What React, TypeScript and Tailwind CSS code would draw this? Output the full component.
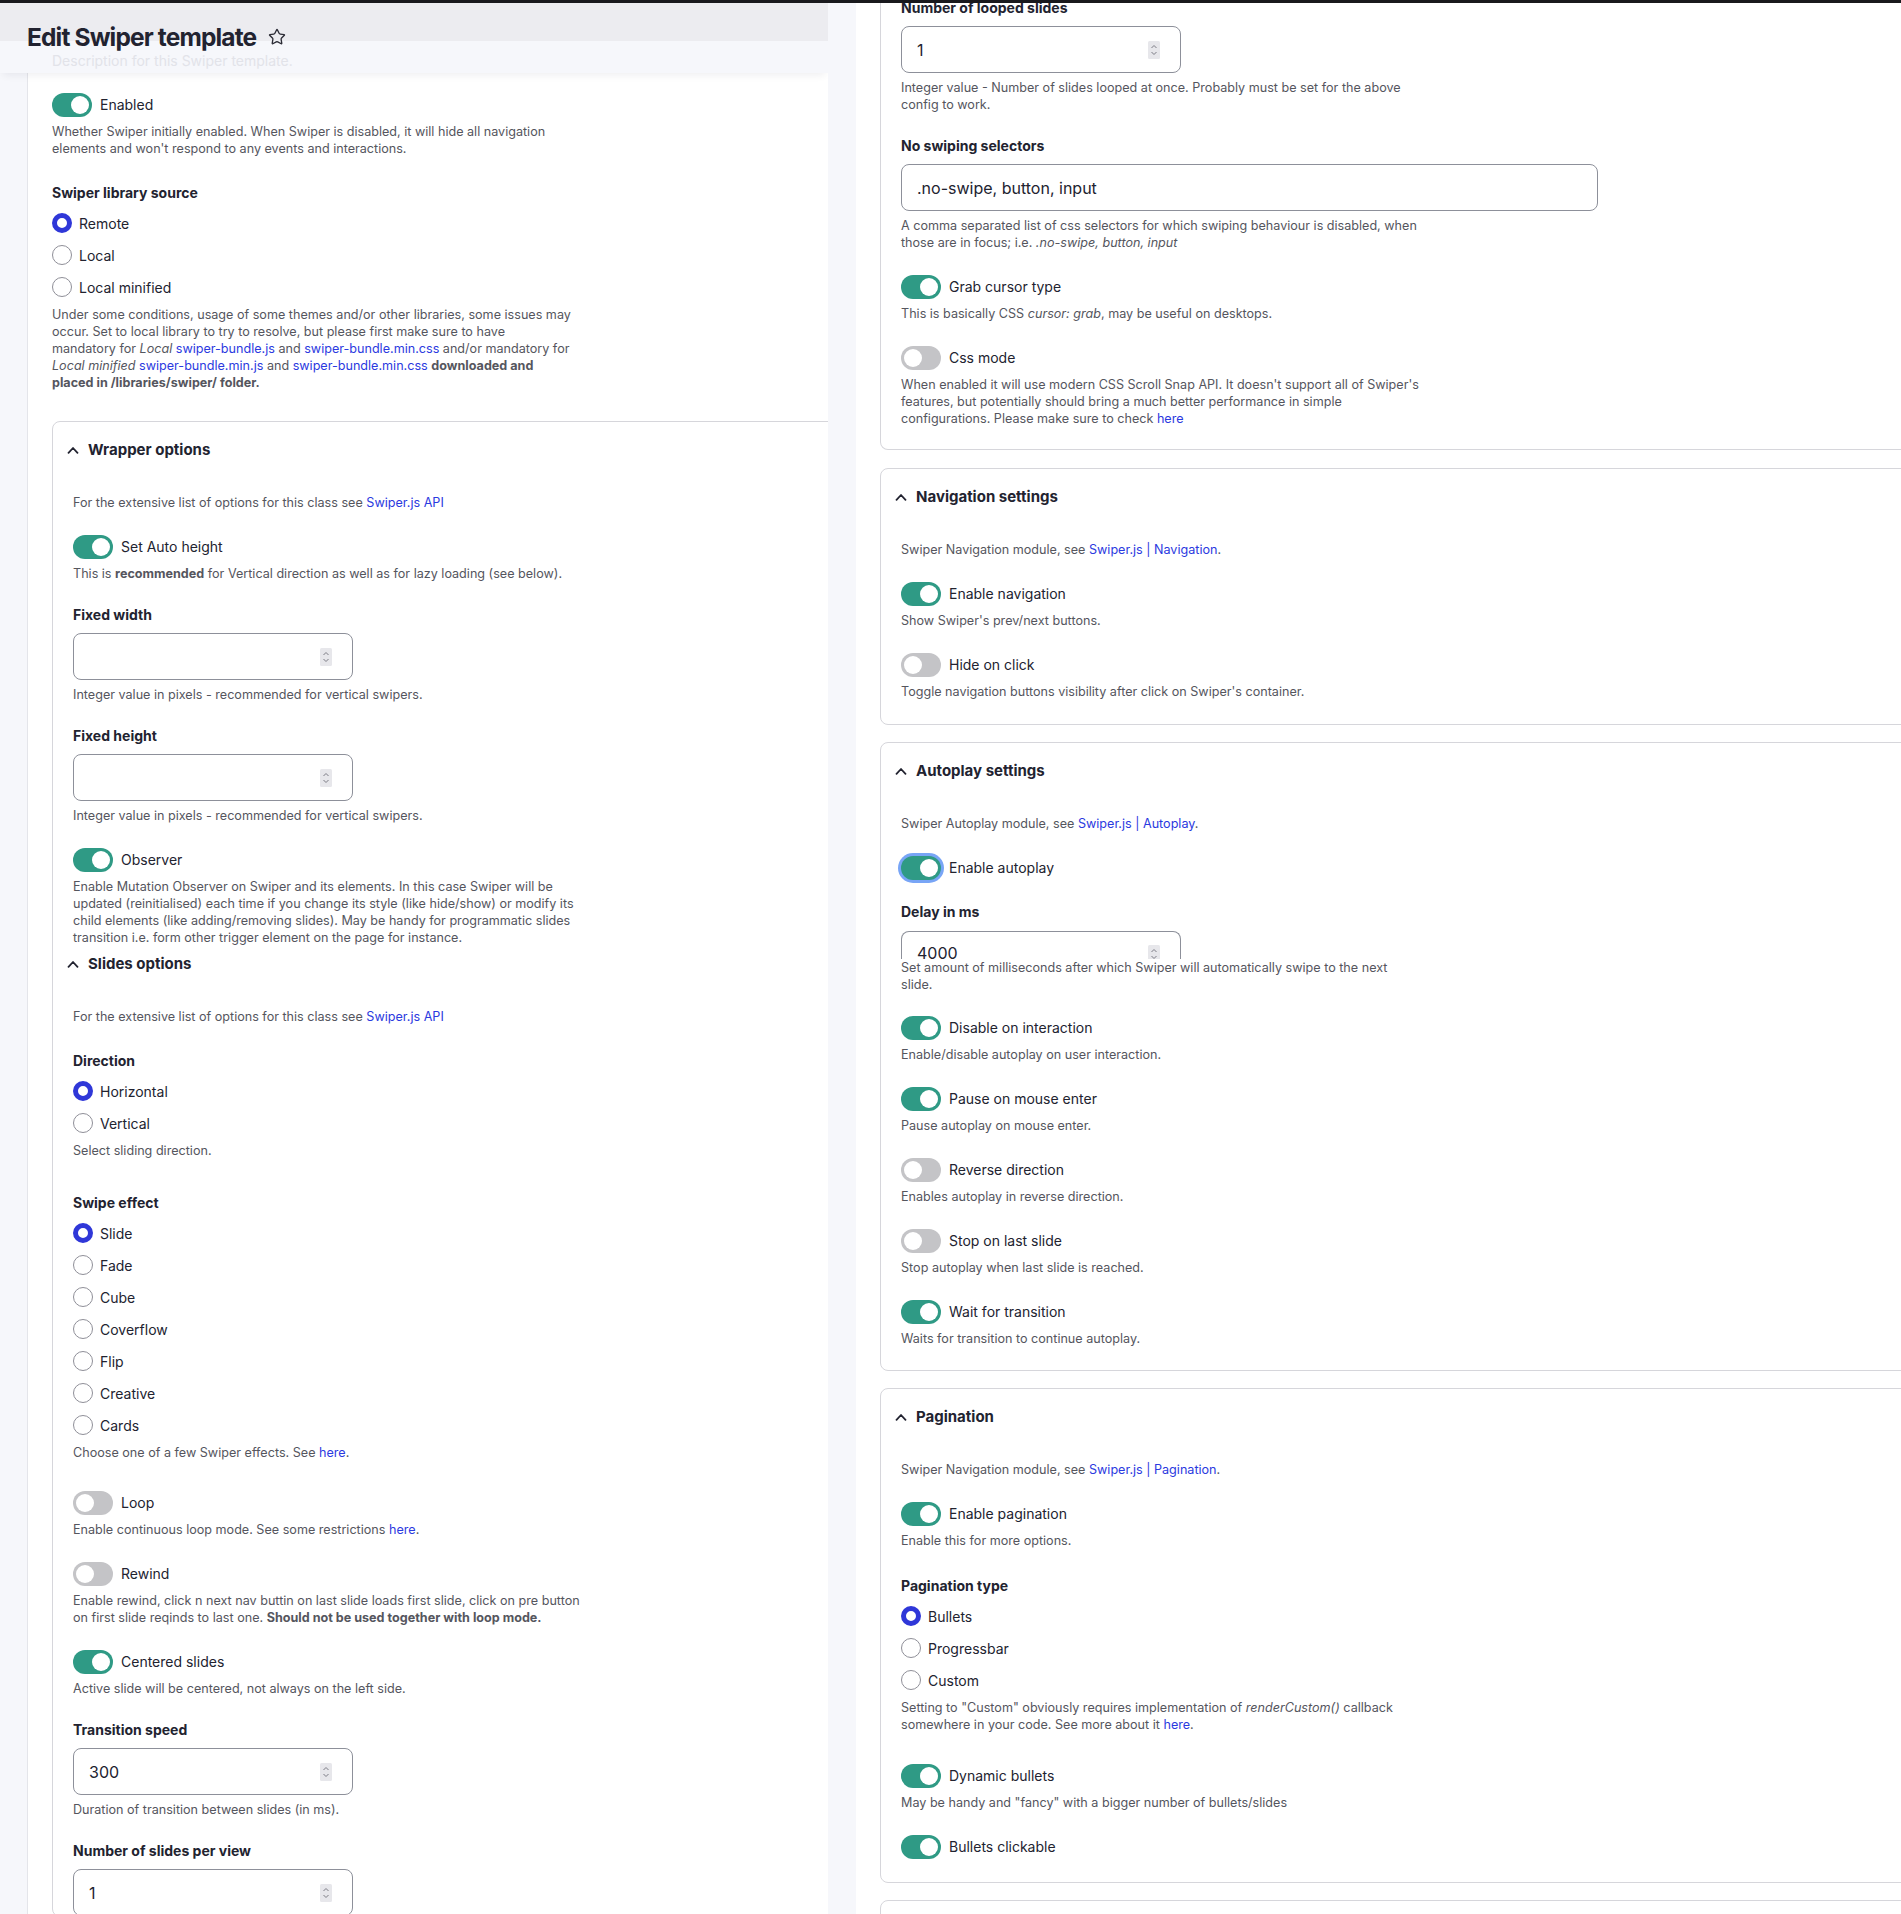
import { Star } from "lucide-react";
import type { ReactNode } from "react";

function A({ children }: { children: ReactNode }) {
  return <span className="text-[#2b3ae0]">{children}</span>;
}

function Desc({ children, className = "" }: { children: ReactNode; className?: string }) {
  return <div className={`max-w-[520px] text-[12.6px] leading-[17px] text-[#55565e] ${className}`}>{children}</div>;
}

function Label({ children, className = "" }: { children: ReactNode; className?: string }) {
  return <div className={`text-[14px] font-bold leading-[18px] ${className}`}>{children}</div>;
}

function Switch({ on, focus = false }: { on: boolean; focus?: boolean }) {
  return (
    <span
      className={`flex h-[24px] w-[40px] shrink-0 items-center rounded-full px-[3px] ${
        on ? "justify-end bg-[#2f9a85]" : "justify-start bg-[#c4c4c7]"
      } ${focus ? "ring-[3px] ring-[#78a5f6]" : ""}`}
    >
      <span className="h-[18px] w-[18px] rounded-full bg-white" />
    </span>
  );
}

function ToggleField({
  on = false,
  focus = false,
  label,
  desc,
  className = "",
}: {
  on?: boolean;
  focus?: boolean;
  label: string;
  desc?: ReactNode;
  className?: string;
}) {
  return (
    <div className={className}>
      <div className="flex h-[24px] items-center gap-[8px]">
        <Switch on={on} focus={focus} />
        <span className="text-[14px] leading-[18px]">{label}</span>
      </div>
      {desc && <Desc className="mt-[6px]">{desc}</Desc>}
    </div>
  );
}

function Radio({ checked = false, label }: { checked?: boolean; label: string }) {
  return (
    <div className="flex h-[32px] items-center gap-[7px]">
      <span
        className={`h-[20px] w-[20px] shrink-0 rounded-full bg-white ${
          checked ? "border-[5px] border-[#2f37d8]" : "border border-[#8f8f98]"
        }`}
      />
      <span className="text-[14px]">{label}</span>
    </div>
  );
}

function RadioGroup({
  label,
  options,
  desc,
  className = "",
}: {
  label: string;
  options: string[];
  desc: ReactNode;
  className?: string;
}) {
  return (
    <div className={className}>
      <Label>{label}</Label>
      <div className="mt-[5px]">
        {options.map((o, i) => (
          <Radio key={o} label={o} checked={i === 0} />
        ))}
      </div>
      <Desc className="mt-[3px]">{desc}</Desc>
    </div>
  );
}

function Spinner() {
  return (
    <svg width="12" height="18" viewBox="0 0 12 18" className="shrink-0">
      <rect width="12" height="18" rx="1.5" fill="#e7e7eb" />
      <path d="M3.5 7 L6 4.5 L8.5 7" fill="none" stroke="#7c7c85" strokeWidth="1" />
      <path d="M3.5 11 L6 13.5 L8.5 11" fill="none" stroke="#7c7c85" strokeWidth="1" />
    </svg>
  );
}

function NumberField({
  label,
  value = "",
  desc,
  className = "",
}: {
  label: string;
  value?: string;
  desc?: ReactNode;
  className?: string;
}) {
  return (
    <div className={className}>
      <Label>{label}</Label>
      <div className="mt-[9px] flex h-[47px] w-[280px] items-center justify-between rounded-[8px] border border-[#8d909a] pl-[15px] pr-[20px]">
        <span className="text-[16px]">{value}</span>
        <Spinner />
      </div>
      {desc && <Desc className="mt-[6px]">{desc}</Desc>}
    </div>
  );
}

function SectionHeader({ title, className = "" }: { title: string; className?: string }) {
  return (
    <div className={`-ml-[6px] flex h-[20px] items-center gap-[9px] ${className}`}>
      <svg width="12" height="8" viewBox="0 0 12 8" className="shrink-0">
        <path
          d="M1.5 6.8 L6 2 L10.5 6.8"
          fill="none"
          stroke="#222330"
          strokeWidth="1.8"
          strokeLinecap="round"
          strokeLinejoin="round"
        />
      </svg>
      <span className="text-[15px] font-bold">{title}</span>
    </div>
  );
}

function Fieldset({ children, className = "" }: { children: ReactNode; className?: string }) {
  return (
    <div className={`-mr-[40px] rounded-[8px] border border-[#d6d6db] pl-[20px] ${className}`}>{children}</div>
  );
}

function LeftColumn() {
  return (
    <div className="w-[828px] shrink-0 overflow-hidden bg-[#f6f7fb]">
      <header className="relative z-10 h-[70px] bg-[linear-gradient(to_bottom,#ececf0_38px,#f6f7fb_38px)] pl-[27px] pt-[20px] shadow-[0_5px_8px_-3px_rgba(20,20,40,0.07)]">
        <div className="flex items-center gap-[12px]">
          <h1 className="text-[24.5px] font-bold leading-[28px] tracking-[-0.035em]">Edit Swiper template</h1>
          <Star size={18} strokeWidth={1.8} className="text-[#2c2c36]" />
        </div>
        <p className="mt-[1px] pl-[25px] text-[14px] leading-[18px] text-[#e2e3e9]">
          Description for this Swiper template.
        </p>
      </header>

      <div className="ml-[27px] h-[1841px] border-l border-[#e4e5ea] bg-white pl-[24px] pt-[20px]">
        <ToggleField
          on
          label="Enabled"
          desc="Whether Swiper initially enabled. When Swiper is disabled, it will hide all navigation elements and won't respond to any events and interactions."
        />

        <RadioGroup
          className="mt-[27px]"
          label="Swiper library source"
          options={["Remote", "Local", "Local minified"]}
          desc={
            <>
              Under some conditions, usage of some themes and/or other libraries, some issues may occur. Set to local
              library to try to resolve, but please first make sure to have mandatory for <i>Local</i>{" "}
              <A>swiper-bundle.js</A> and <A>swiper-bundle.min.css</A> and/or mandatory for <i>Local minified</i>{" "}
              <A>swiper-bundle.min.js</A> and <A>swiper-bundle.min.css</A>{" "}
              <b>downloaded and placed in /libraries/swiper/ folder.</b>
            </>
          }
        />

        <Fieldset className="mt-[30px] pt-[18px]">
          <SectionHeader title="Wrapper options" />
          <Desc className="mt-[34px]">
            For the extensive list of options for this class see <A>Swiper.js API</A>
          </Desc>
          <ToggleField
            on
            className="mt-[24px]"
            label="Set Auto height"
            desc={
              <>
                This is <b>recommended</b> for Vertical direction as well as for lazy loading (see below).
              </>
            }
          />
          <NumberField
            className="mt-[24px]"
            label="Fixed width"
            desc="Integer value in pixels - recommended for vertical swipers."
          />
          <NumberField
            className="mt-[24px]"
            label="Fixed height"
            desc="Integer value in pixels - recommended for vertical swipers."
          />
          <ToggleField
            on
            className="mt-[24px]"
            label="Observer"
            desc="Enable Mutation Observer on Swiper and its elements. In this case Swiper will be updated (reinitialised) each time if you change its style (like hide/show) or modify its child elements (like adding/removing slides). May be handy for programmatic slides transition i.e. form other trigger element on the page for instance."
          />

          <SectionHeader className="mt-[8px]" title="Slides options" />
          <Desc className="mt-[34px]">
            For the extensive list of options for this class see <A>Swiper.js API</A>
          </Desc>
          <RadioGroup
            className="mt-[27px]"
            label="Direction"
            options={["Horizontal", "Vertical"]}
            desc="Select sliding direction."
          />
          <RadioGroup
            className="mt-[35px]"
            label="Swipe effect"
            options={["Slide", "Fade", "Cube", "Coverflow", "Flip", "Creative", "Cards"]}
            desc={
              <>
                Choose one of a few Swiper effects. See <A>here</A>.
              </>
            }
          />
          <ToggleField
            className="mt-[30px]"
            label="Loop"
            desc={
              <>
                Enable continuous loop mode. See some restrictions <A>here</A>.
              </>
            }
          />
          <ToggleField
            className="mt-[24px]"
            label="Rewind"
            desc={
              <>
                Enable rewind, click n next nav buttin on last slide loads first slide, click on pre button on first
                slide reqinds to last one. <b>Should not be used together with loop mode.</b>
              </>
            }
          />
          <ToggleField
            on
            className="mt-[24px]"
            label="Centered slides"
            desc="Active slide will be centered, not always on the left side."
          />
          <NumberField
            className="mt-[24px]"
            label="Transition speed"
            value="300"
            desc="Duration of transition between slides (in ms)."
          />
          <NumberField className="mt-[24px]" label="Number of slides per view" value="1" />
        </Fieldset>
      </div>
    </div>
  );
}

function RightColumn() {
  return (
    <div className="flex-1 overflow-hidden bg-white pl-[24px]">
      <div className="-mr-[40px] rounded-b-[8px] border-x border-b border-[#d6d6db] pb-[22px] pl-[20px]">
        <NumberField
          className="-mt-[4px]"
          label="Number of looped slides"
          value="1"
          desc="Integer value - Number of slides looped at once. Probably must be set for the above config to work."
        />
        <div className="mt-[24px]">
          <Label>No swiping selectors</Label>
          <div className="mt-[9px] flex h-[47px] w-[697px] items-center rounded-[8px] border border-[#8d909a] pl-[15px] text-[16px]">
            .no-swipe, button, input
          </div>
          <Desc className="mt-[6px]">
            A comma separated list of css selectors for which swiping behaviour is disabled, when those are in focus;
            i.e. <i>.no-swipe, button, input</i>
          </Desc>
        </div>
        <ToggleField
          on
          className="mt-[24px]"
          label="Grab cursor type"
          desc={
            <>
              This is basically CSS <i>cursor: grab</i>, may be useful on desktops.
            </>
          }
        />
        <ToggleField
          className="mt-[24px]"
          label="Css mode"
          desc={
            <>
              When enabled it will use modern CSS Scroll Snap API. It doesn't support all of Swiper's features, but
              potentially should bring a much better performance in simple configurations. Please make sure to check{" "}
              <A>here</A>
            </>
          }
        />
      </div>

      <Fieldset className="mt-[18px] pb-[24px] pt-[18px]">
        <SectionHeader title="Navigation settings" />
        <Desc className="mt-[34px]">
          Swiper Navigation module, see <A>Swiper.js | Navigation</A>.
        </Desc>
        <ToggleField on className="mt-[24px]" label="Enable navigation" desc="Show Swiper's prev/next buttons." />
        <ToggleField
          className="mt-[24px]"
          label="Hide on click"
          desc="Toggle navigation buttons visibility after click on Swiper's container."
        />
      </Fieldset>

      <Fieldset className="mt-[17px] pb-[23px] pt-[18px]">
        <SectionHeader title="Autoplay settings" />
        <Desc className="mt-[34px]">
          Swiper Autoplay module, see <A>Swiper.js | Autoplay</A>.
        </Desc>
        <ToggleField on focus className="mt-[24px]" label="Enable autoplay" />
        <Label className="mt-[23px]">Delay in ms</Label>
        <div className="mt-[10px] flex h-[28px] w-[280px] items-start justify-between overflow-hidden rounded-t-[8px] border-x border-t border-[#8d909a] pl-[15px] pr-[20px] pt-[11px]">
          <span className="text-[16px] leading-[20px]">4000</span>
          <span className="pt-[2px]">
            <Spinner />
          </span>
        </div>
        <Desc className="max-w-[505px]">
          Set amount of milliseconds after which Swiper will automatically swipe to the next slide.
        </Desc>
        <ToggleField
          on
          className="mt-[23px]"
          label="Disable on interaction"
          desc="Enable/disable autoplay on user interaction."
        />
        <ToggleField on className="mt-[24px]" label="Pause on mouse enter" desc="Pause autoplay on mouse enter." />
        <ToggleField className="mt-[24px]" label="Reverse direction" desc="Enables autoplay in reverse direction." />
        <ToggleField className="mt-[24px]" label="Stop on last slide" desc="Stop autoplay when last slide is reached." />
        <ToggleField
          on
          className="mt-[24px]"
          label="Wait for transition"
          desc="Waits for transition to continue autoplay."
        />
      </Fieldset>

      <Fieldset className="mt-[17px] pb-[23px] pt-[18px]">
        <SectionHeader title="Pagination" />
        <Desc className="mt-[34px]">
          Swiper Navigation module, see <A>Swiper.js | Pagination</A>.
        </Desc>
        <ToggleField on className="mt-[24px]" label="Enable pagination" desc="Enable this for more options." />
        <RadioGroup
          className="mt-[28px]"
          label="Pagination type"
          options={["Bullets", "Progressbar", "Custom"]}
          desc={
            <>
              Setting to "Custom" obviously requires implementation of <i>renderCustom()</i> callback somewhere in your
              code. See more about it <A>here</A>.
            </>
          }
        />
        <ToggleField
          on
          className="mt-[31px]"
          label="Dynamic bullets"
          desc={'May be handy and "fancy" with a bigger number of bullets/slides'}
        />
        <ToggleField on className="mt-[24px]" label="Bullets clickable" />
      </Fieldset>

      <Fieldset className="mt-[17px] h-[60px]">
        <span />
      </Fieldset>
    </div>
  );
}

export default function App() {
  return (
    <div className="h-[1914px] w-[1901px] overflow-hidden bg-white font-['Inter','Noto_Sans',sans-serif] text-[#222330]">
      <div className="h-[3px] bg-[#19191d]" />
      <div className="flex h-[1911px]">
        <LeftColumn />
        <div className="w-[28px] shrink-0 bg-[#f6f7fb]" />
        <RightColumn />
      </div>
    </div>
  );
}
